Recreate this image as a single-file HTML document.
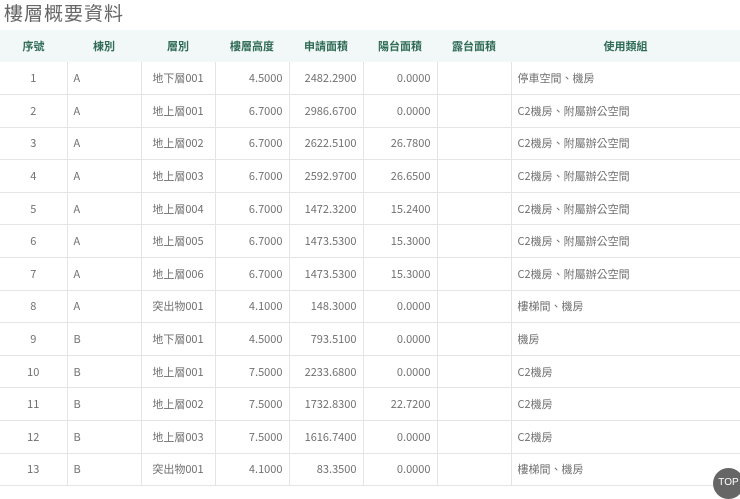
<!DOCTYPE html>
<html><head><meta charset="utf-8"><style>
body{margin:0;width:740px;height:489px;overflow:hidden;background:#fff;font-family:"Noto Sans CJK TC",sans-serif;}
h1{position:absolute;left:4px;top:0;margin:0;font-weight:normal;font-size:19px;color:#666;letter-spacing:1px;line-height:26px;}
table{position:absolute;left:0;top:30px;width:740px;border-collapse:collapse;table-layout:fixed;font-size:11px;color:#707070;}
th{background:#f2f7f8;color:#2f6b55;font-weight:bold;height:32px;padding:0;font-size:11px;line-height:14px;}
td{height:32.6px;padding:0 6px;border-bottom:1px solid #e4e4e4;border-left:1px solid #e4e4e4;line-height:14px;vertical-align:middle;box-sizing:border-box;}
td:first-child{border-left:none;text-align:center;}
td.c{text-align:center}td.r{text-align:right}
.top{position:absolute;left:713px;top:468px;width:31px;height:31px;border-radius:50%;background:#666;color:#fff;font-size:10px;text-align:center;line-height:30px;font-family:"Liberation Sans",sans-serif;}
</style></head><body>
<h1>樓層概要資料</h1>
<table>
<colgroup><col style="width:67px"><col style="width:74px"><col style="width:74px"><col style="width:74px"><col style="width:74px"><col style="width:74px"><col style="width:74px"><col></colgroup>
<tr><th>序號</th><th>棟別</th><th>層別</th><th>樓層高度</th><th>申請面積</th><th>陽台面積</th><th>露台面積</th><th>使用類組</th></tr>
<tr><td>1</td><td>A</td><td class="c">地下層001</td><td class="r">4.5000</td><td class="r">2482.2900</td><td class="r">0.0000</td><td></td><td>停車空間、機房</td></tr>
<tr><td>2</td><td>A</td><td class="c">地上層001</td><td class="r">6.7000</td><td class="r">2986.6700</td><td class="r">0.0000</td><td></td><td>C2機房、附屬辦公空間</td></tr>
<tr><td>3</td><td>A</td><td class="c">地上層002</td><td class="r">6.7000</td><td class="r">2622.5100</td><td class="r">26.7800</td><td></td><td>C2機房、附屬辦公空間</td></tr>
<tr><td>4</td><td>A</td><td class="c">地上層003</td><td class="r">6.7000</td><td class="r">2592.9700</td><td class="r">26.6500</td><td></td><td>C2機房、附屬辦公空間</td></tr>
<tr><td>5</td><td>A</td><td class="c">地上層004</td><td class="r">6.7000</td><td class="r">1472.3200</td><td class="r">15.2400</td><td></td><td>C2機房、附屬辦公空間</td></tr>
<tr><td>6</td><td>A</td><td class="c">地上層005</td><td class="r">6.7000</td><td class="r">1473.5300</td><td class="r">15.3000</td><td></td><td>C2機房、附屬辦公空間</td></tr>
<tr><td>7</td><td>A</td><td class="c">地上層006</td><td class="r">6.7000</td><td class="r">1473.5300</td><td class="r">15.3000</td><td></td><td>C2機房、附屬辦公空間</td></tr>
<tr><td>8</td><td>A</td><td class="c">突出物001</td><td class="r">4.1000</td><td class="r">148.3000</td><td class="r">0.0000</td><td></td><td>樓梯間、機房</td></tr>
<tr><td>9</td><td>B</td><td class="c">地下層001</td><td class="r">4.5000</td><td class="r">793.5100</td><td class="r">0.0000</td><td></td><td>機房</td></tr>
<tr><td>10</td><td>B</td><td class="c">地上層001</td><td class="r">7.5000</td><td class="r">2233.6800</td><td class="r">0.0000</td><td></td><td>C2機房</td></tr>
<tr><td>11</td><td>B</td><td class="c">地上層002</td><td class="r">7.5000</td><td class="r">1732.8300</td><td class="r">22.7200</td><td></td><td>C2機房</td></tr>
<tr><td>12</td><td>B</td><td class="c">地上層003</td><td class="r">7.5000</td><td class="r">1616.7400</td><td class="r">0.0000</td><td></td><td>C2機房</td></tr>
<tr><td>13</td><td>B</td><td class="c">突出物001</td><td class="r">4.1000</td><td class="r">83.3500</td><td class="r">0.0000</td><td></td><td>樓梯間、機房</td></tr>
</table>
<div class="top">TOP</div>
</body></html>
